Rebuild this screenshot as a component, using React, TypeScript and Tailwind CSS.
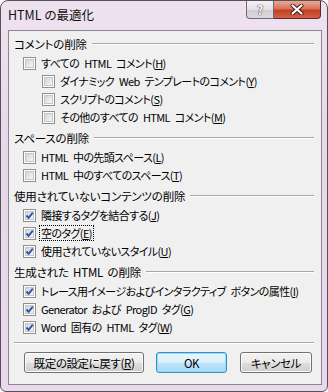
const jp = "font-['Noto_Sans_CJK_JP','Noto_Sans',sans-serif]";

function Box({ checked }: { checked?: boolean }) {
  return (
    <span className="flex h-[13px] w-[13px] shrink-0 items-center justify-center border border-[#8e8f8f] bg-white">
      <span className="relative flex h-[9px] w-[9px] items-center justify-center border border-[#c4c6c9] bg-gradient-to-br from-[#d2d4d8] to-[#f7f7f7]">
        {checked && (
          <svg width="9" height="9" viewBox="0 0 9 9" className="absolute -left-px -top-px">
            <path d="M1.5 4.5 L3.6 6.8 L7.8 1.6" fill="none" stroke="#2c51a8" strokeWidth="1.9" />
          </svg>
        )}
      </span>
    </span>
  );
}

function Heading({ text }: { text: string }) {
  return (
    <div className="mt-[1px] flex h-[21px] items-center pl-[5px] pr-[7px]">
      <span className="whitespace-nowrap text-[11.5px] leading-[14px] tracking-[-0.2px] [word-spacing:2px] [font-feature-settings:'palt']">
        {text}
      </span>
      <span className="ml-[5px] flex-1 border-t border-b border-t-[#a7a7a7] border-b-white" />
    </div>
  );
}

function Item({
  label,
  mnemonic,
  checked,
  sub,
  focus
}: {
  label: string;
  mnemonic: string;
  checked?: boolean;
  sub?: boolean;
  focus?: boolean;
}) {
  return (
    <div className={`flex h-[18px] items-center ${sub ? "pl-[33px]" : "pl-[14px]"}`}>
      <Box checked={checked} />
      <span
        className={`ml-[3px] whitespace-nowrap text-[11px] leading-[14px] tracking-[-0.6px] [word-spacing:3px] [font-feature-settings:'palt'] ${
          focus ? "border border-dotted border-black px-px" : "border border-transparent px-px"
        }`}
      >
        {label}(<u>{mnemonic}</u>)
      </span>
    </div>
  );
}

function Button({ children, primary, w }: { children: React.ReactNode; primary?: boolean; w: string }) {
  return (
    <button
      type="button"
      className={`${w} flex h-[21px] items-center justify-center rounded-[3px] border text-[11.5px] leading-[14px] tracking-[-0.4px] text-black [font-feature-settings:'palt'] ${
        primary
          ? "border-[#3c8dc9] bg-[linear-gradient(#eaf6fd_0%,#d9f0fc_50%,#bee6fd_51%,#a7d9f5_100%)] shadow-[inset_0_0_0_1px_#8fdcf9]"
          : "border-[#707070] bg-[linear-gradient(#f2f2f2_0%,#ebebeb_50%,#dddddd_51%,#cfcfcf_100%)] shadow-[inset_0_0_0_1px_#fcfcfc]"
      }`}
    >
      {children}
    </button>
  );
}

export default function App() {
  return (
    <div className={`${jp} flex h-[392px] w-[328px] flex-col rounded-t-[8px] rounded-b-[6px] border border-[#55525a] bg-[linear-gradient(180deg,#efe2f0_0%,#e6d7e9_40%,#ead9ec_100%)] text-black`}>
      <div className="flex h-[29px] items-start justify-between">
        <div className="flex h-[29px] items-center pl-[7px] text-[12.5px] text-[#111] [font-feature-settings:'palt']">HTML の最適化</div>
        <div className="mr-[6px] flex">
          <div className="flex h-[18px] w-[28px] items-center justify-center rounded-bl-[4px] border border-t-0 border-[#6c6a72] bg-[linear-gradient(#f4f1f5_0%,#e4e0e8_50%,#cfcad4_51%,#dcd8e0_100%)] text-[13px] font-bold leading-none text-white [text-shadow:0_0_1px_#222,0_0_1px_#222]">
            ?
          </div>
          <div className="flex h-[18px] w-[47px] items-center justify-center rounded-br-[4px] border border-l-0 border-t-0 border-[#5a2a26] bg-[linear-gradient(#eaa996_0%,#d9735a_45%,#c3401f_55%,#d4604a_100%)]">
            <svg width="14" height="11" viewBox="0 0 14 11">
              <path d="M2.5 1.5 L11.5 9.5 M11.5 1.5 L2.5 9.5" stroke="#3a1a16" strokeWidth="4" strokeLinecap="round" />
              <path d="M2.5 1.5 L11.5 9.5 M11.5 1.5 L2.5 9.5" stroke="#ffffff" strokeWidth="2.2" strokeLinecap="round" />
            </svg>
          </div>
        </div>
      </div>

      <div className="ml-[7px] flex h-[355px] w-[314px] flex-col border border-[#8a8791] bg-[#f0f0f0] pt-[1px]">
        <Heading text="コメントの削除" />
        <Item label="すべての HTML コメント" mnemonic="H" />
        <Item label="ダイナミック Web テンプレートのコメント" mnemonic="Y" sub />
        <Item label="スクリプトのコメント" mnemonic="S" sub />
        <Item label="その他のすべての HTML コメント" mnemonic="M" sub />

        <Heading text="スペースの削除" />
        <Item label="HTML 中の先頭スペース" mnemonic="L" />
        <Item label="HTML 中のすべてのスペース" mnemonic="T" />

        <Heading text="使用されていないコンテンツの削除" />
        <Item label="隣接するタグを結合する" mnemonic="J" checked />
        <Item label="空のタグ" mnemonic="E" checked focus />
        <Item label="使用されていないスタイル" mnemonic="U" checked />

        <Heading text="生成された HTML の削除" />
        <Item label="トレース用イメージおよびインタラクティブ ボタンの属性" mnemonic="I" checked />
        <Item label="Generator および ProgID タグ" mnemonic="G" checked />
        <Item label="Word 固有の HTML タグ" mnemonic="W" checked />

        <div className="ml-[5px] mr-[7px] mt-[6px] border-t border-b border-t-[#a7a7a7] border-b-white" />

        <div className="mt-[8px] flex pl-[15px]">
          <Button w="w-[120px]">
            既定の設定に戻す(<u>R</u>)
          </Button>
          <div className="ml-[12px]">
            <Button w="w-[71px]" primary>
              OK
            </Button>
          </div>
          <div className="ml-[13px]">
            <Button w="w-[72px]">キャンセル</Button>
          </div>
        </div>
      </div>
    </div>
  );
}
